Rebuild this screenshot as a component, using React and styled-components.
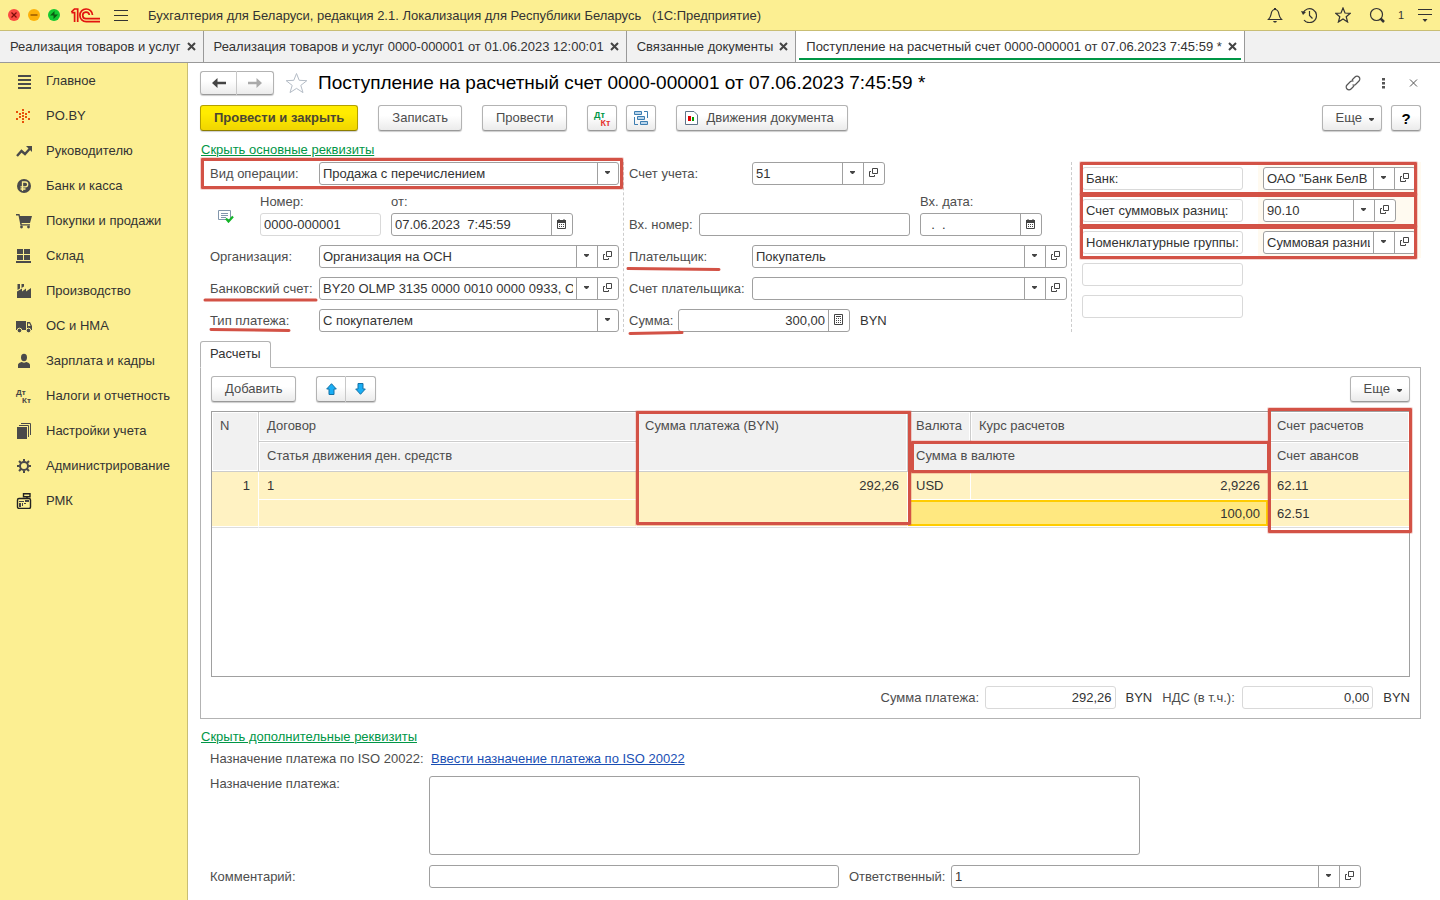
import React, { useId } from 'react';
import styled, { createGlobalStyle, css } from 'styled-components';

const color = {
  text: '#333333',
  label: '#4d4d4d',
  frame: '#a0a0a0',
  frameLight: '#d9d9d9',
  yellow: '#fcef92',
  green: '#009646',
  mark: '#d35246',
};

const GlobalStyle = createGlobalStyle`
  *, *::before, *::after { box-sizing: border-box; }
  body {
    margin: 0;
    background: #fff;
    color: ${color.text};
    font: 13px/15px 'Liberation Sans', Arial, sans-serif;
  }
  button, input, select, textarea { font: inherit; color: inherit; }
  svg { display: block; flex: none; }
`;

/* ---------- shell ---------- */

const Page = styled.div`
  display: flex;
  flex-direction: column;
  min-height: 100vh;
`;

const TopBar = styled.header`
  display: flex;
  align-items: center;
  height: 31px;
  padding: 0 7px;
  background: ${color.yellow};
  border-bottom: 1px solid #c9be74;
`;

const WindowDots = styled.div`
  display: flex;
  gap: 6px;
`;

const BarButton = styled.button`
  display: flex;
  align-items: center;
  justify-content: center;
  padding: 0;
  border: 0;
  background: none;
  cursor: pointer;
`;

const Logo = styled.svg`
  margin: 0 13px 0 10px;
`;

const AppTitle = styled.span`
  flex: 1;
  margin-left: 20px;
  white-space: pre;
`;

const BarTools = styled.div`
  display: flex;
  align-items: center;
  gap: 18px;
`;

const Counter = styled.span`
  display: flex;
  align-items: center;
  gap: 13px;
  margin-left: -5px;
  font-size: 11px;
`;

const TabStrip = styled.nav`
  display: flex;
  height: 32px;
  background: #f1f1f1;
  border-bottom: 1px solid #999;
`;

const Tab = styled.div`
  display: flex;
  align-items: center;
  gap: 6px;
  padding: 0 7px 0 10px;
  border-right: 1px solid #999;
  white-space: nowrap;
  ${(p) =>
    p.$active &&
    css`
      background: linear-gradient(${color.green}, ${color.green}) center bottom 2px / calc(100% - 6px) 2px no-repeat, #fff;
    `}
`;

const TabLink = styled.a`
  color: inherit;
  text-decoration: none;
`;

const Body = styled.div`
  display: flex;
  flex: 1;
`;

const Sidebar = styled.nav`
  flex: 0 0 188px;
  background: ${color.yellow};
  border-right: 1px solid #c9be74;
`;

const SideLink = styled.a`
  display: flex;
  align-items: center;
  gap: 14px;
  height: 35px;
  padding-left: 16px;
  color: ${color.text};
  text-decoration: none;
`;

const Main = styled.main`
  flex: 1;
  min-width: 0;
  padding: 8px 19px 12px 12px;
`;

/* ---------- buttons ---------- */

const Button = styled.button`
  display: flex;
  align-items: center;
  justify-content: center;
  gap: 8px;
  height: 26px;
  width: ${(p) => (p.$square ? '30px' : 'auto')};
  padding: ${(p) => (p.$square ? '0' : '0 13px 2px')};
  border: 1px solid #b3b3b3;
  border-bottom-color: #999;
  border-radius: 3px;
  background: linear-gradient(#fff 40%, #ebebeb);
  box-shadow: 0 1px 1px rgba(0, 0, 0, 0.2);
  color: ${color.label};
  white-space: nowrap;
  cursor: pointer;
  ${(p) =>
    p.$primary &&
    css`
      border-color: #b3a000;
      border-bottom-color: #8c7d00;
      background: linear-gradient(#ffec00 30%, #f0d500);
      font-weight: bold;
      color: #4a4632;
    `}
  ${(p) => p.$more && 'padding: 0 6px 2px 13px; gap: 6px;'}
`;

const ButtonPair = styled.div`
  display: flex;
  & > button { width: ${(p) => p.$width}; height: ${(p) => p.$height}; padding: 0; }
  & > button:first-child { border-radius: 3px 0 0 3px; border-right-color: #ccc; }
  & > button:last-child { border-radius: 0 3px 3px 0; border-left: 0; }
`;

const Help = styled.b`
  font-size: 15px;
  color: #000;
`;

const HeaderRow = styled.div`
  display: flex;
  align-items: center;
  height: 24px;
`;

const Title = styled.h1`
  flex: 1;
  margin: 0 0 0 10px;
  font-size: 19px;
  line-height: 24px;
  font-weight: normal;
  color: #000;
  white-space: nowrap;
`;

const Star = styled(BarButton)`
  margin-left: 11px;
`;

const HeaderTools = styled.div`
  display: flex;
  align-items: center;
  gap: 14px;
`;

const Toolbar = styled.div`
  display: flex;
  align-items: center;
  gap: ${(p) => p.$gap || '20px'};
  margin-top: ${(p) => p.$top || '0'};
`;

const Group = styled.div`
  display: flex;
  align-items: center;
  gap: 9px;
`;

const Push = styled.div`
  display: flex;
  gap: 9px;
  margin-left: auto;
`;

const Toggle = styled.a`
  display: block;
  width: fit-content;
  margin: ${(p) => p.$margin};
  color: ${color.green};
`;

/* ---------- form ---------- */

const Form = styled.div`
  display: grid;
  grid-template-columns: 424px minmax(448px, 1fr) 349px;
`;

const Column = styled.div`
  display: flex;
  flex-direction: column;
  gap: 9px;
  padding: 0 4px 0 ${(p) => p.$indent || '0'};
  border-right: 1px dashed #ccc;
`;

const SideColumn = styled.div`
  padding-left: 10px;
`;

const Row = styled.div`
  position: relative;
  display: flex;
  align-items: ${(p) => p.$align || 'center'};
  padding-left: ${(p) => p.$indent || '0'};
`;

const Stack = styled.div`
  display: flex;
  flex-direction: column;
  gap: 4px;
  margin-left: ${(p) => p.$left || '0'};
`;

const Label = styled.label`
  position: relative;
  flex: 0 0 ${(p) => p.$width || 'auto'};
  color: ${color.label};
  white-space: nowrap;
  line-height: ${(p) => p.$line || '15px'};
`;

const Frame = styled.div`
  position: relative;
  display: flex;
  height: 23px;
  ${(p) => (p.$width ? `flex: 0 0 auto; width: ${p.$width};` : 'flex: 1; min-width: 0;')}
  border: 1px solid ${(p) => (p.$light ? color.frameLight : color.frame)};
  border-radius: 3px;
  background: #fff;
`;

const control = css`
  flex: 1;
  min-width: 0;
  width: 100%;
  height: 21px;
  margin: 0;
  padding: 0 3px;
  border: 0;
  outline: 0;
  background: none;
  color: ${color.text};
`;

const Input = styled.input`
  ${control}
  text-align: ${(p) => (p.$right ? 'right' : 'left')};
`;

const Select = styled.select`
  ${control}
  appearance: none;
`;

const Cap = styled.button`
  display: flex;
  align-items: center;
  justify-content: center;
  flex: 0 0 21px;
  height: 21px;
  padding: 0 2px 2px 0;
  border: 0;
  border-left: 1px solid ${color.frame};
  background: none;
  cursor: pointer;
`;

const SelectCap = styled(Cap)`
  position: absolute;
  top: 0;
  right: 0;
  width: 21px;
  pointer-events: none;
`;

const SideRow = styled.div`
  position: relative;
  display: flex;
  height: 32px;
`;

const SideName = styled.div`
  display: flex;
  padding-top: 5px;
`;

const SideValue = styled.div`
  display: flex;
  flex: 1;
  margin-left: 15px;
  padding: 5px 4px 4px 5px;
  background: #fffaf0;
`;

const DocState = styled.div`
  width: 50px;
  padding: 0 0 13px 8px;
`;

const RowEnd = styled.span`
  flex: 0 0 25px;
`;

/* Hand-drawn marks lying over the form */
const MarkBox = styled.span`
  position: absolute;
  z-index: 1;
  inset: ${(p) => p.$inset};
  height: ${(p) => p.$height || 'auto'};
  border: 3px solid ${color.mark};
  box-shadow: 0 0 0 1px rgba(211, 82, 70, 0.25);
  border-radius: 1px;
  pointer-events: none;
`;

const MarkSvg = styled.svg`
  position: absolute;
  z-index: 1;
  top: ${(p) => p.$top};
  left: ${(p) => p.$left};
  pointer-events: none;
`;

const Underline = ({ width, left, top, slope = 0 }) => (
  <MarkSvg $left={left} $top={top} width={width} height="6" aria-hidden="true">
    <path d={`M2 ${3 - slope / 2}L${width - 2} ${3 + slope / 2}`} stroke={color.mark} strokeWidth="3" strokeLinecap="round" />
  </MarkSvg>
);

/* ---------- tab panel and table ---------- */

const PanelTab = styled.button`
  position: relative;
  display: block;
  height: 27px;
  margin: 9px 0 -1px;
  padding: 0 9px 2px;
  border: 1px solid #b3b3b3;
  border-bottom-color: #fff;
  border-radius: 3px 3px 0 0;
  background: #fff;
`;

const Panel = styled.section`
  padding: 8px 10px 9px;
  border: 1px solid #b3b3b3;
`;

const TableBox = styled.div`
  min-height: 266px;
  margin: 9px 0;
  border: 1px solid ${color.frame};
`;

const Table = styled.table`
  width: 100%;
  table-layout: fixed;
  border-collapse: separate;
  border-spacing: 0;
`;

const Th = styled.th`
  position: relative;
  height: 30px;
  padding: 6px 8px;
  border: 0 solid #ccc;
  border-width: 0 ${(p) => (p.$last ? '0' : '1px')} 1px 0;
  background: #f1f1f1;
  box-shadow: inset 0 0 0 1px #fff;
  color: ${color.label};
  font-weight: normal;
  text-align: left;
  vertical-align: top;
  white-space: nowrap;
`;

const Td = styled.td`
  height: 28px;
  padding: 6px 8px;
  border: 0 solid #fff;
  border-width: 0 ${(p) => (p.$last ? '0' : '1px')} 1px 0;
  background: #fff2c2;
  text-align: ${(p) => (p.$right ? 'right' : 'left')};
  vertical-align: top;
  ${(p) => p.$low && 'border-bottom-color: #ddd; box-shadow: inset 0 -1px #fff;'}
  ${(p) =>
    p.$current &&
    css`
      background: #ffe880;
      box-shadow: inset 0 -1px #fff, inset 2px 2px #ffcc00, inset -2px -3px #ffcc00;
    `}
`;

const Totals = styled.div`
  display: flex;
  justify-content: flex-end;
  align-items: center;
`;

const Unit = styled.span`
  margin-left: 10px;
  & + label { margin-left: 10px; }
`;

const IsoLink = styled.a`
  color: #1a4fb4;
`;

const TextArea = styled.textarea`
  display: block;
  width: 711px;
  height: 79px;
  padding: 3px;
  border: 1px solid ${color.frame};
  border-radius: 3px;
  outline: 0;
  resize: none;
`;

const Extra = styled.div`
  display: flex;
  flex-direction: column;
  gap: 10px;
  padding-left: 10px;
`;

/* ---------- icons ---------- */

const Svg = ({ size = 16, w, h, children, ...rest }) => (
  <svg width={w || size} height={h || size} viewBox={`0 0 ${w || size} ${h || size}`} fill="none" aria-hidden="true" {...rest}>
    {children}
  </svg>
);

const ArrowDown = () => (
  <Svg w={5} h={3}>
    <path d="M0 0h5v1L3 3H2L0 1z" fill="#444" />
  </Svg>
);

const OpenIcon = () => (
  <Svg w={9} h={9}>
    <path d="M3.5.5h5v5h-5zM2 3.5H.5v5h5V7" stroke="#444" />
  </Svg>
);

const CalendarIcon = () => (
  <Svg w={9} h={10}>
    <path d="M.5 2.5h8v7h-8z" stroke="#444" />
    <path d="M0 1h9v3H0zM1.500 0h1v2h-1zM6.500 0h1v2h-1zM2 5h1v1H2zM4 5h1v1H4zM6 5h1v1H6zM2 7h1v1H2zM4 7h1v1H4zM6 7h1v1H6z" fill="#444" />
  </Svg>
);

const CalculatorIcon = () => (
  <Svg w={9} h={11}>
    <path d="M.5.5h8v10h-8zM2 2.500h5" stroke="#444" />
    <path d="M2 4h1v1H2zM4 4h1v1H4zM6 4h1v1H6zM2 6h1v1H2zM4 6h1v1H4zM6 6h1v1H6zM2 8h1v1H2zM4 8h1v1H4zM6 8h1v1H6z" fill="#444" />
  </Svg>
);

const CloseIcon = ({ size = 9, width = 2 }) => (
  <Svg size={size}>
    <path d={`M1 1L${size - 1} ${size - 1}M${size - 1} 1L1 ${size - 1}`} stroke="#444" strokeWidth={width} />
  </Svg>
);

const DtKtSvg = styled(Svg)`
  overflow: visible;
`;

const DtKt = ({ top = '#444', bottom = '#444', size = 16, font = 8 }) => (
  <DtKtSvg size={size}>
    <text x="0" y={size / 2 - 1} fontSize={font} fontWeight="bold" fill={top}>Дт</text>
    <text x={size / 2 - 2} y={size - 1} fontSize={font} fontWeight="bold" fill={bottom}>Кт</text>
  </DtKtSvg>
);

const dark = '#4a4a4a';
const sideItems = [
  ['Главное', <Svg><path d="M2 2h13v2H2zM2 6h13v2H2zM2 10h13v2H2zM2 14h13v2H2z" fill={dark} /></Svg>],
  ['PO.BY', <Svg><path d="M6 1h2v2H6zM0 3h2v2H0zM12 3h2v2h-2zM3 5h2v2H3zM9 5h2v2H9zM6 4h2v2H6zM0 10h2v2H0zM3 8h2v2H3zM6 7h2v2H6zM9 8h2v2H9zM12 10h2v2h-2zM6 10h2v2H6zM6 13h2v2H6z" fill="#e8500a" /></Svg>],
  ['Руководителю', <Svg><path d="M1 13l4.500-5L9 11l5-5.500" stroke={dark} strokeWidth="2.400" /><path d="M10 3h6v6z" fill={dark} /></Svg>],
  ['Банк и касса', <Svg><circle cx="8" cy="8" r="7" fill={dark} /><path d="M6.500 13V4h2.800a2.300 2.300 0 010 4.800H4.500M4.500 11h5" stroke={color.yellow} strokeWidth="1.300" /></Svg>],
  ['Покупки и продажи', <Svg><path d="M0 1h3.500l.5 2h12l-2 7H5.500l.3 1.200H14V12.500H4.500L2.500 2.500H0z" fill={dark} /><circle cx="5.500" cy="14" r="1.400" fill={dark} /><circle cx="12.500" cy="14" r="1.400" fill={dark} /></Svg>],
  ['Склад', <Svg><path d="M1 1h6v5H1zM8 1h6v5H8zM1 7h6v5H1zM8 7h6v5H8zM0 13h15v2H0z" fill={dark} /></Svg>],
  ['Производство', <Svg><path d="M1 15V8.500l5-3v3l4-3v3l5-3.500V15zM1.500 1H4v4.500l-2.500 1.500zM5.500 1H8v2.500l-2.500 1.500z" fill={dark} /></Svg>],
  ['ОС и НМА', <Svg><path d="M0 3h10v9H0zM11 4h3l2 4v4h-5z" fill={dark} /><path d="M12 5.500h1.500l1 2.500H12z" fill={color.yellow} /><circle cx="3.500" cy="12.500" r="2.300" fill={dark} stroke={color.yellow} /><circle cx="12.500" cy="12.500" r="2.300" fill={dark} stroke={color.yellow} /></Svg>],
  ['Зарплата и кадры', <Svg><ellipse cx="8" cy="4.500" rx="3" ry="3.700" fill={dark} /><path d="M2 15v-3c0-2 3-3 4-3 1 1 3 1 4 0 1 0 4 1 4 3v3z" fill={dark} /></Svg>],
  ['Налоги и отчетность', <DtKt />],
  ['Настройки учета', <Svg><path d="M1 4h10v12H1z" fill={dark} /><path d="M3 2.500h9.500V14M5 .5h9.500V12" stroke={dark} /></Svg>],
  ['Администрирование', <Svg><circle cx="8" cy="8" r="4" stroke={dark} strokeWidth="2" /><path d="M8 1v2.500M8 12.500V15M1 8h2.500M12.500 8H15M3 3l2 2M11 11l2 2M3 13l2-2M11 5l2-2" stroke={dark} strokeWidth="2" /></Svg>],
  ['РМК', <Svg><rect x="1.500" y="5.500" width="13" height="10" rx="1.500" stroke="#222" strokeWidth="1.400" /><path d="M7.500.7h6.500v3H7.500zM11 3.500v2" stroke="#222" strokeWidth="1.400" /><path d="M3 8h5v1H3zM3 10h2v4H3zM6 10h1v3H6zM9 7h4v2H9zM8 10h2v1H8z" fill="#444" /></Svg>],
];

/* ---------- field parts ---------- */

const Caps = ({ kinds, name }) =>
  kinds.map((kind) => (
    <Cap key={kind} type="button" aria-label={`${name}: ${capName[kind]}`}>
      {kind === 'list' && <ArrowDown />}
      {kind === 'open' && <OpenIcon />}
      {kind === 'date' && <CalendarIcon />}
      {kind === 'calc' && <CalculatorIcon />}
    </Cap>
  ));

const capName = { list: 'выбрать', open: 'открыть', date: 'календарь', calc: 'калькулятор' };

function Field({ id, name, value = '', width, caps = [], light, right, readOnly }) {
  return (
    <Frame $width={width} $light={light}>
      <Input id={id} aria-label={id ? undefined : name} defaultValue={value} readOnly={readOnly} $right={right} />
      <Caps kinds={caps} name={name} />
    </Frame>
  );
}

function LabeledField({ label, labelWidth, labelLine, mark, ...field }) {
  const id = useId();
  return (
    <>
      <Label htmlFor={id} $width={labelWidth} $line={labelLine}>
        {label}
        {mark}
      </Label>
      <Field id={id} name={label} {...field} />
    </>
  );
}

function LabeledSelect({ label, labelWidth, mark, value }) {
  const id = useId();
  return (
    <>
      <Label htmlFor={id} $width={labelWidth}>
        {label}
        {mark}
      </Label>
      <Frame>
        <Select id={id} defaultValue={value}>
          <option>{value}</option>
        </Select>
        <SelectCap as="span" aria-hidden="true">
          <ArrowDown />
        </SelectCap>
      </Frame>
    </>
  );
}

function MoreButton() {
  return (
    <Button type="button" $more>
      Еще
      <Svg w={7} h={7}>
        <path d="M1 4h5v1L4 7H3L1 5z" fill="#444" />
      </Svg>
    </Button>
  );
}

const openTabs = [
  'Реализация товаров и услуг',
  'Реализация товаров и услуг 0000-000001 от 01.06.2023 12:00:01',
  'Связанные документы',
  'Поступление на расчетный счет 0000-000001 от 07.06.2023 7:45:59 *',
];

const sideFields = [
  { name: 'Банк:', value: 'ОАО "Банк БелВ', width: '153px' },
  { name: 'Счет суммовых разниц:', value: '90.10', width: '133px' },
  { name: 'Номенклатурные группы:', value: 'Суммовая разница', width: '153px' },
  { name: '' },
  { name: '' },
];

const pick = ['list', 'open'];

function TopBarView() {
  const ink = '#333';
  return (
    <TopBar>
      <WindowDots>
        <BarButton type="button" aria-label="Закрыть окно">
          <Svg size={14}><circle cx="7" cy="7" r="6" fill="#fb4a42" /><path d="M4.500 4.500l5 5M9.500 4.500l-5 5" stroke="#7d0c0a" strokeWidth="1.200" /></Svg>
        </BarButton>
        <BarButton type="button" aria-label="Свернуть окно">
          <Svg size={14}><circle cx="7" cy="7" r="6" fill="#fdb10a" /><path d="M3.500 7h7" stroke="#9a5b00" strokeWidth="1.500" /></Svg>
        </BarButton>
        <BarButton type="button" aria-label="Развернуть окно">
          <Svg size={14}><circle cx="7" cy="7" r="6" fill="#14c832" /><path d="M7.500 3v4.500H3zM6.500 11V6.500H11z" fill="#0a5c12" /></Svg>
        </BarButton>
      </WindowDots>
      <Logo width="30" height="15" viewBox="0 0 30 15" fill="none" role="img" aria-label="1С">
        <path d="M.3 4.200L3.500 1H6.700V14M.5 4.600H3.600V14" stroke="#e2140f" strokeWidth="1.700" />
        <path d="M21.500 7A6.300 6.300 0 1 0 15.200 13.600H29M18.300 7A3.300 3.300 0 1 0 15.200 10.700H29" stroke="#e2140f" strokeWidth="1.700" />
      </Logo>
      <BarButton type="button" aria-label="Меню">
        <Svg w={14} h={13}><path d="M0 1.500h14M0 6.500h14M0 11.500h14" stroke={ink} /></Svg>
      </BarButton>
      <AppTitle>Бухгалтерия для Беларуси, редакция 2.1. Локализация для Республики Беларусь   (1С:Предприятие)</AppTitle>
      <BarTools>
        <BarButton type="button" aria-label="Уведомления">
          <Svg><path d="M1.500 12.500h13c-1.500-1.500-2-2.500-2.500-5C11.500 4 10.500 2.500 8 2.500S4.500 4 4 7.500c-.5 2.500-1 3.500-2.500 5z" stroke={ink} strokeWidth="1.200" /><path d="M7 1h2v2H7zM6 14h4l-1 1.500H7z" fill={ink} /></Svg>
        </BarButton>
        <BarButton type="button" aria-label="История">
          <Svg><path d="M2 6A7 7 0 1 1 3 13M8.500 4v4.500l3 3" stroke={ink} strokeWidth="1.200" /><path d="M0 4l5 1-3 3z" fill={ink} /></Svg>
        </BarButton>
        <BarButton type="button" aria-label="Избранное">
          <Svg><path d="M8 1l2 5 5.300.3-4.100 3.400L12.600 15 8 12l-4.600 3 1.400-5.300L.7 6.300 6 6z" stroke={ink} strokeWidth="1.200" /></Svg>
        </BarButton>
        <BarButton type="button" aria-label="Поиск">
          <Svg><circle cx="7.500" cy="7.500" r="6" stroke={ink} strokeWidth="1.200" /><path d="M11.500 11.500l3.500 3.500" stroke={ink} strokeWidth="2.500" /></Svg>
        </BarButton>
        <Counter>
          1
          <BarButton type="button" aria-label="Настройки">
            <Svg w={16} h={14}><path d="M1 1.500h14M1 6.500h14" stroke={ink} strokeWidth="1.200" /><path d="M5.500 11h5L8 14z" fill={ink} /></Svg>
          </BarButton>
        </Counter>
      </BarTools>
    </TopBar>
  );
}

function DocumentForm() {
  return (
    <Form>
      <Column>
        <Row $indent="10px">
          <LabeledSelect label="Вид операции:" labelWidth="109px" value="Продажа с перечислением" />
          <MarkBox $inset="-4px -4px -4px 1px" />
        </Row>
        <Row $indent="10px" $align="flex-end">
          <DocState>
            <Svg w={16} h={14}>
              <path d="M.5 1.500h12v9H.5z" fill="#fff" stroke="#8296ac" />
              <path d="M3 4.500h7M3 6.500h7M3 8.500h5" stroke="#8296ac" />
              <path d="M8 9.500l2.500 3L15 7.500" stroke="#14b428" strokeWidth="2.200" />
            </Svg>
          </DocState>
          <Stack>
            <LabeledField label="Номер:" value="0000-000001" width="121px" light />
          </Stack>
          <Stack $left="10px">
            <LabeledField label="от:" value={'07.06.2023\u00a0 7:45:59'} width="182px" caps={['date']} />
          </Stack>
        </Row>
        <Row $indent="10px">
          <LabeledField label="Организация:" labelWidth="109px" value="Организация на ОСН" caps={pick} />
        </Row>
        <Row $indent="10px">
          <LabeledField
            label="Банковский счет:"
            labelWidth="109px"
            value="BY20 OLMP 3135 0000 0010 0000 0933, О"
            caps={pick}
            mark={<Underline width={115} left="-7px" top="16px" />}
          />
        </Row>
        <Row $indent="10px">
          <LabeledSelect
            label="Тип платежа:"
            labelWidth="109px"
            value="С покупателем"
            mark={<Underline width={82} left="-1px" top="14px" slope={1} />}
          />
        </Row>
      </Column>

      <Column $indent="5px">
        <Row>
          <LabeledField label="Счет учета:" labelWidth="123px" value="51" width="133px" caps={pick} />
        </Row>
        <Row $align="flex-end">
          <LabeledField label="Вх. номер:" labelWidth="70px" labelLine="23px" />
          <Stack $left="10px">
            <LabeledField label="Вх. дата:" value={'\u00a0\u00a0.\u00a0\u00a0.'} width="122px" caps={['date']} />
          </Stack>
          <RowEnd />
        </Row>
        <Row>
          <LabeledField
            label="Плательщик:"
            labelWidth="123px"
            value="Покупатель"
            caps={pick}
            mark={<Underline width={95} left="-3px" top="17px" slope={1} />}
          />
        </Row>
        <Row>
          <LabeledField label="Счет плательщика:" labelWidth="123px" caps={pick} />
        </Row>
        <Row>
          <LabeledField
            label="Сумма:"
            labelWidth="49px"
            value="300,00"
            width="172px"
            caps={['calc']}
            right
            mark={<Underline width={56} left="-1px" top="17px" slope={-1} />}
          />
          <Unit>BYN</Unit>
        </Row>
      </Column>

      <SideColumn>
        {sideFields.map((f, i) => (
          <SideRow key={i}>
            <SideName>
              <Field name={`Реквизит ${i + 1}`} value={f.name} width="161px" light readOnly />
            </SideName>
            {f.value && (
              <>
                <SideValue>
                  <Field name={f.name} value={f.value} width={f.width} caps={pick} />
                </SideValue>
                <MarkBox $inset="0 4px -1px -2px" />
              </>
            )}
          </SideRow>
        ))}
      </SideColumn>
    </Form>
  );
}

function Payments() {
  return (
    <>
      <PanelTab type="button">Расчеты</PanelTab>
      <Panel>
        <Toolbar>
          <Button type="button">Добавить</Button>
          <ButtonPair $width="30px" $height="26px">
            <Button type="button" aria-label="Вверх">
              <Svg w={11} h={12}><path d="M5.500.7l4.800 5.300H8v5.500H3V6H.7z" fill="#19aef5" stroke="#1571a5" /></Svg>
            </Button>
            <Button type="button" aria-label="Вниз">
              <Svg w={11} h={12}><path d="M5.500 11.300l4.800-5.300H8V.5H3V6H.7z" fill="#19aef5" stroke="#1571a5" /></Svg>
            </Button>
          </ButtonPair>
          <Push>
            <MoreButton />
          </Push>
        </Toolbar>
        <TableBox>
          <Table>
            <colgroup>
              <col width="47" />
              <col />
              <col width="271" />
              <col width="63" />
              <col width="298" />
              <col width="140" />
            </colgroup>
            <thead>
              <tr>
                <Th rowSpan="2">N</Th>
                <Th>Договор</Th>
                <Th rowSpan="2">
                  Сумма платежа (BYN)
                  <MarkBox $inset="-1px -4px auto -1px" $height="114px" />
                </Th>
                <Th>Валюта</Th>
                <Th>Курс расчетов</Th>
                <Th $last>
                  Счет расчетов
                  <MarkBox $inset="-4px -3px auto -1px" $height="125px" />
                </Th>
              </tr>
              <tr>
                <Th>Статья движения ден. средств</Th>
                <Th colSpan="2">
                  Сумма в валюте
                  <MarkBox $inset="-1px -2px -2px 3px" />
                </Th>
                <Th $last>Счет авансов</Th>
              </tr>
            </thead>
            <tbody>
              <tr>
                <Td rowSpan="2" $right $low>1</Td>
                <Td>1</Td>
                <Td rowSpan="2" $right $low>292,26</Td>
                <Td>USD</Td>
                <Td $right>2,9226</Td>
                <Td $last>62.11</Td>
              </tr>
              <tr>
                <Td $low />
                <Td colSpan="2" $right $low $current>100,00</Td>
                <Td $last $low>62.51</Td>
              </tr>
            </tbody>
          </Table>
        </TableBox>
        <Totals>
          <LabeledField label="Сумма платежа:" labelWidth="104px" value="292,26" width="131px" light right readOnly />
          <Unit>BYN</Unit>
          <LabeledField label="НДС (в т.ч.):" labelWidth="80px" value="0,00" width="131px" light right readOnly />
          <Unit>BYN</Unit>
        </Totals>
      </Panel>
    </>
  );
}

const ReportIcon = styled(Svg)`
  margin: 2px 0 0 -5px;
`;

export default function App() {
  const purposeId = useId();
  return (
    <Page>
      <GlobalStyle />
      <TopBarView />
      <TabStrip>
        {openTabs.map((title, i) => (
          <Tab key={title} $active={i === openTabs.length - 1}>
            <TabLink href="#">{title}</TabLink>
            <BarButton type="button" aria-label="Закрыть вкладку">
              <CloseIcon />
            </BarButton>
          </Tab>
        ))}
      </TabStrip>
      <Body>
        <Sidebar>
          {sideItems.map(([title, icon]) => (
            <SideLink key={title} href="#">
              {icon}
              {title}
            </SideLink>
          ))}
        </Sidebar>
        <Main>
          <HeaderRow>
            <ButtonPair $width="37px" $height="24px">
              <Button type="button" aria-label="Назад">
                <Svg w={14} h={10}><path d="M5.500 0v3.700H14v2.600H5.500V10L0 5z" fill="#444" /></Svg>
              </Button>
              <Button type="button" aria-label="Вперед">
                <Svg w={14} h={10}><path d="M8.500 0v3.700H0v2.600h8.500V10L14 5z" fill="#aaa" /></Svg>
              </Button>
            </ButtonPair>
            <Star type="button" aria-label="В избранное">
              <Svg w={23} h={22}>
                <path d="M11.500 1.500l2.700 6.800 7.600.4-6 4.700 2.200 7.200-6.500-4.200L5 20.600l2.200-7.200-6-4.700 7.600-.4z" stroke="#b4bcc6" />
              </Svg>
            </Star>
            <Title>Поступление на расчетный счет 0000-000001 от 07.06.2023 7:45:59 *</Title>
            <HeaderTools>
              <BarButton type="button" aria-label="Ссылка">
                <Svg>
                  <path d="M7 5l3-3a2.800 2.800 0 014 4l-3.500 3.500a2.600 2.600 0 01-3 .3M9 11l-3 3a2.800 2.800 0 01-4-4l3.500-3.500a2.600 2.600 0 013-.3" stroke="#555" strokeWidth="1.200" />
                </Svg>
              </BarButton>
              <BarButton type="button" aria-label="Действия">
                <Svg><path d="M7 3h3v2.500H7zM7 7h3v2.500H7zM7 11h3v2.500H7z" fill="#555" /></Svg>
              </BarButton>
              <BarButton type="button" aria-label="Закрыть">
                <Svg><path d="M5 4.500l7 7M12 4.500l-7 7" stroke="#555" /></Svg>
              </BarButton>
            </HeaderTools>
          </HeaderRow>
          <Toolbar $top="10px">
            <Button type="button" $primary>Провести и закрыть</Button>
            <Button type="button">Записать</Button>
            <Button type="button">Провести</Button>
            <Group>
              <Button type="button" $square aria-label="Дт Кт">
                <DtKt top="#009646" bottom="#e5322d" size={17} font={9} />
              </Button>
              <Button type="button" $square aria-label="Структура подчиненности">
                <Svg>
                  <path d="M1.500 1.500h7v3h-7zM4.500 6.500h7v3h-7zM7.500 11.500h7v3h-7z" fill="#b8d4ea" stroke="#3c7db1" />
                  <path d="M11 1.500h3.500v6.500M1.500 7v7.500H5" stroke="#3c7db1" />
                </Svg>
              </Button>
            </Group>
            <Button type="button">
              <ReportIcon w={13} h={14}>
                <path d="M.5.500h8.500l3.500 3.500v9.500H.5z" fill="#fff" stroke="#5f7488" />
                <path d="M3 5h3v5H3z" fill="#e00000" />
                <path d="M7 6h2v4H7z" fill="#00a000" />
              </ReportIcon>
              Движения документа
            </Button>
            <Push>
              <MoreButton />
              <Button type="button" $square aria-label="Справка">
                <Help>?</Help>
              </Button>
            </Push>
          </Toolbar>
          <Toggle href="#" $margin="11px 0 5px 1px">Скрыть основные реквизиты</Toggle>
          <DocumentForm />
          <Payments />
          <Toggle href="#" $margin="10px 0 7px 1px">Скрыть дополнительные реквизиты</Toggle>
          <Extra>
            <Row>
              <Label as="span" $width="221px">Назначение платежа по ISO 20022:</Label>
              <IsoLink href="#">Ввести назначение платежа по ISO 20022</IsoLink>
            </Row>
            <Row $align="flex-start">
              <Label htmlFor={purposeId} $width="219px">Назначение платежа:</Label>
              <TextArea id={purposeId} />
            </Row>
            <Row>
              <LabeledField label="Комментарий:" labelWidth="219px" width="410px" />
              <Stack $left="10px" />
              <LabeledField label="Ответственный:" labelWidth="102px" value="1" width="410px" caps={pick} />
            </Row>
          </Extra>
        </Main>
      </Body>
    </Page>
  );
}
